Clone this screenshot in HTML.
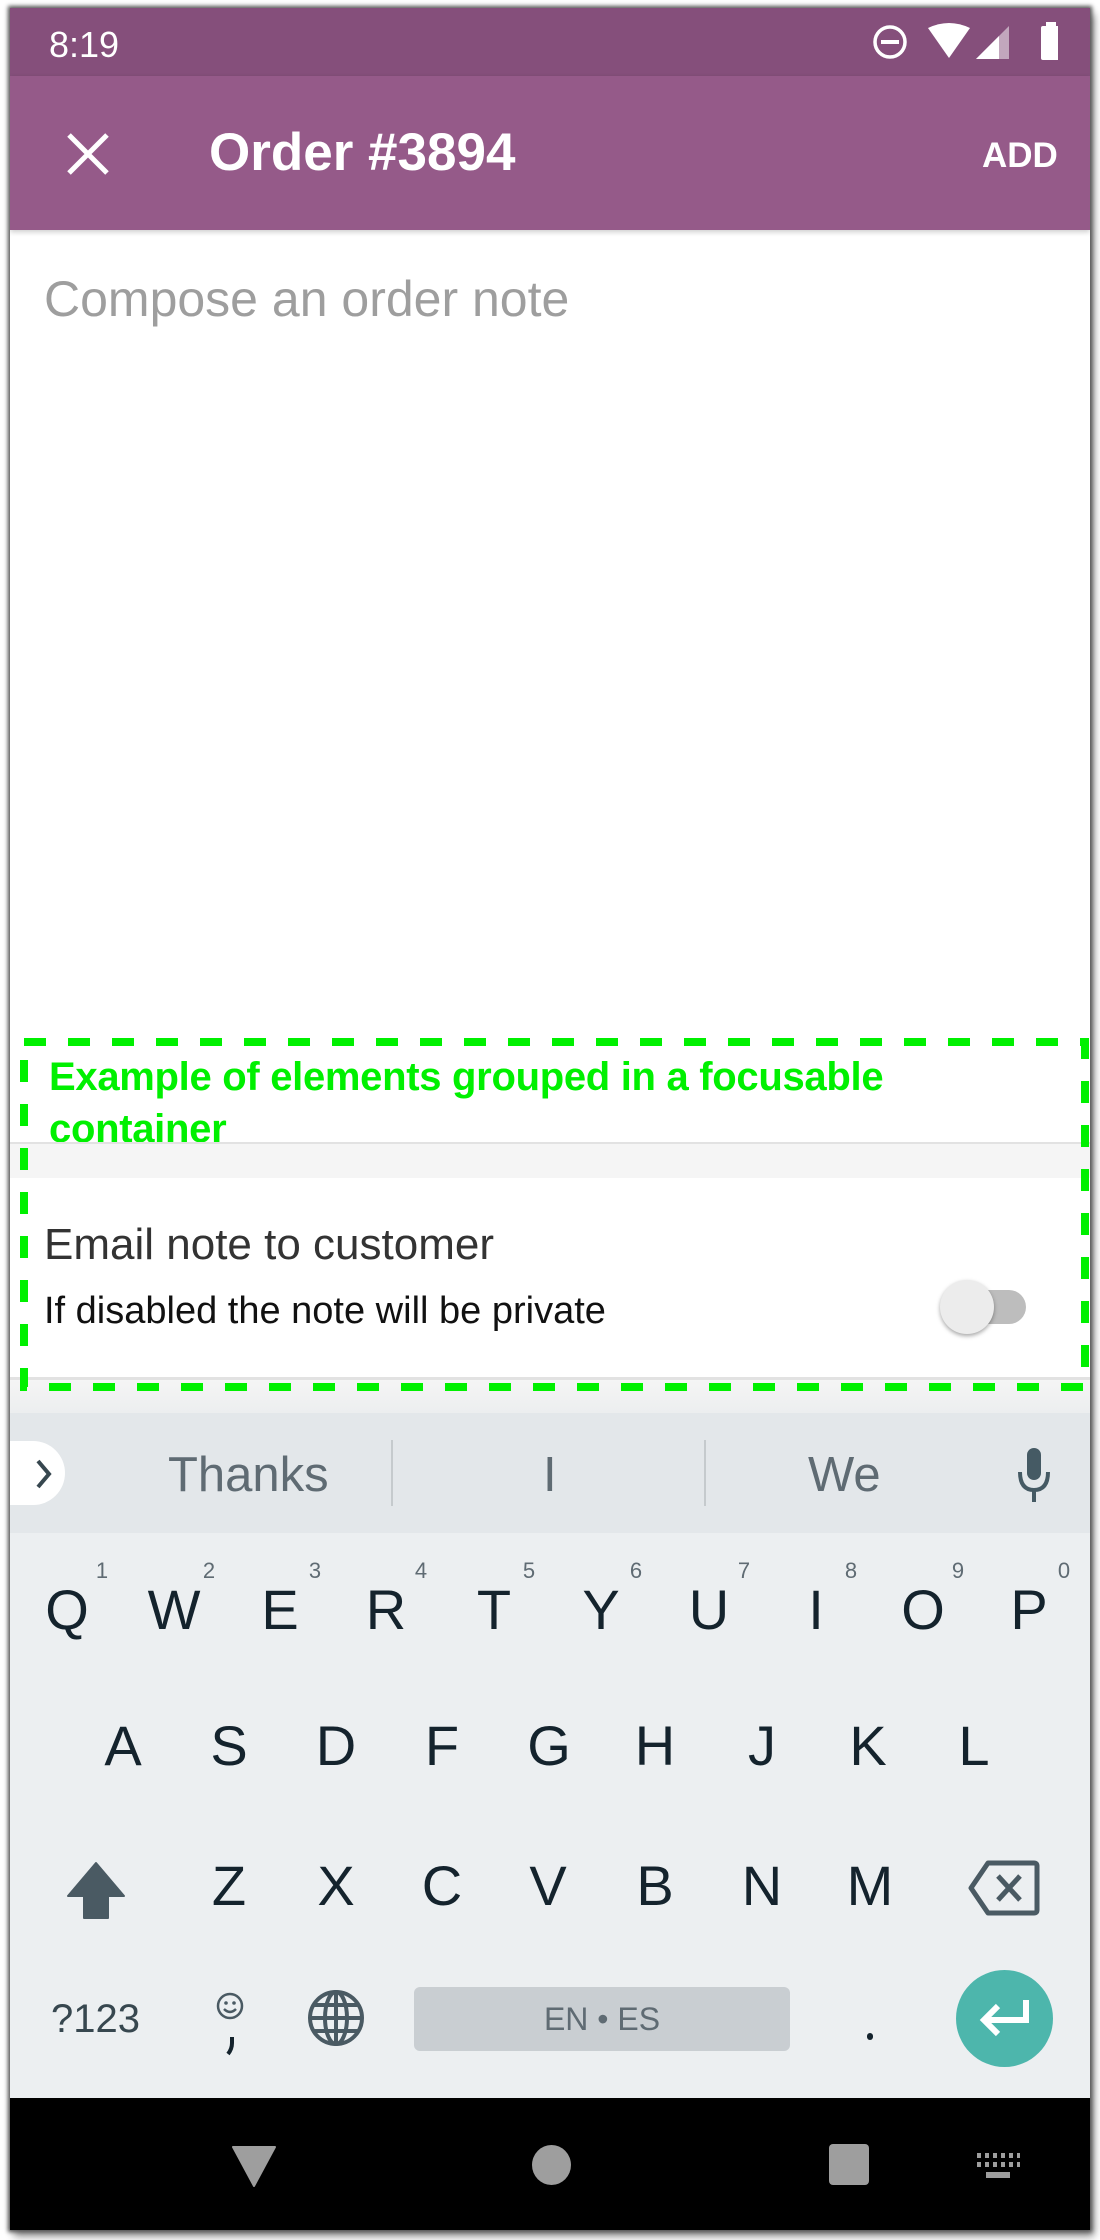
<!DOCTYPE html>
<html><head><meta charset="utf-8"><style>
*{margin:0;padding:0;box-sizing:border-box}
body{width:1100px;height:2240px;background:#fff;position:relative;overflow:hidden;font-family:"Liberation Sans",Arial,sans-serif}
.a{position:absolute}
.phone{left:10px;top:8px;width:1080px;height:2222px;box-shadow:0 0 4px 2px #555, 4px 6px 8px #888;overflow:hidden;background:#fff}
.k{position:absolute;font-size:56px;color:#14232d;transform:translate(-50%,-50%);line-height:1}
.n{position:absolute;font-size:22px;color:#5f6b73;transform:translate(-50%,-50%);line-height:1}
</style></head><body>
<div class="a phone">
 <div class="a" style="left:0;top:0;width:1080px;height:68px;background:#854f7b"></div>
 <div class="a" style="left:39px;top:16px;color:#fff;font-size:36px;">8:19</div>
 <svg class="a" style="left:858px;top:14px" width="190" height="40" viewBox="0 0 190 40">
  <circle cx="22" cy="20" r="15" fill="none" stroke="#fff" stroke-width="3.5"/>
  <rect x="13" y="18" width="18" height="4" fill="#fff"/>
  <path d="M60 6 Q81 -4 102 6 L81 36 Z" fill="#fff"/>
  <path d="M108 37 L141 37 L141 4 Z" fill="#fff" opacity="0.5"/>
  <path d="M108 37 L131 37 L131 14 Z" fill="#fff"/>
  <rect x="173" y="4" width="20" height="34" rx="2" fill="#fff"/>
  <rect x="178" y="0" width="10" height="6" fill="#fff"/>
 </svg>
 <div class="a" style="left:0;top:68px;width:1080px;height:154px;background:#955a89;box-shadow:0 2px 5px rgba(0,0,0,.2)"></div>
 <svg class="a" style="left:56px;top:124px" width="44" height="44" viewBox="0 0 44 44"><path d="M3 3 L41 41 M41 3 L3 41" stroke="#fff" stroke-width="5"/></svg>
 <div class="a" style="left:199px;top:115px;color:#fff;font-size:53px;font-weight:bold;line-height:60px">Order #3894</div>
 <div class="a" style="left:972px;top:128px;color:#fff;font-size:35px;font-weight:bold;line-height:40px">ADD</div>
 <div class="a" style="left:34px;top:261px;color:#9e9e9e;font-size:50px;line-height:60px">Compose an order note</div>

 <div class="a" style="left:39px;top:1043px;color:#00f000;font-size:40px;font-weight:bold;line-height:52px;letter-spacing:-0.3px">Example of elements grouped in a focusable<br>container</div>
 <div class="a" style="left:0;top:1134px;width:1080px;height:2px;background:#e2e2e2"></div>
 <div class="a" style="left:0;top:1136px;width:1080px;height:34px;background:#f5f5f5"></div>
 <div class="a" style="left:34px;top:1212px;color:#333;font-size:44px;line-height:50px">Email note to customer</div>
 <div class="a" style="left:34px;top:1280px;color:#111;font-size:38px;line-height:46px">If disabled the note will be private</div>
 <div class="a" style="left:946px;top:1282px;width:70px;height:34px;border-radius:17px;background:#bdbdbd"></div>
 <div class="a" style="left:930px;top:1272px;width:54px;height:54px;border-radius:50%;background:#ececec;box-shadow:0 2px 4px rgba(0,0,0,.35)"></div>
 <div class="a" style="left:0;top:1369px;width:1080px;height:3px;background:#e2e2e2"></div>
 <div class="a" style="left:0;top:1372px;width:1080px;height:33px;background:linear-gradient(#f5f5f5,#eceeef)"></div>

 <div class="a" style="left:0;top:1405px;width:1080px;height:120px;background:#e3e7ea"></div>
 <div class="a" style="left:-30px;top:1433px;width:85px;height:64px;border-radius:32px;background:#fff"></div>
 <svg class="a" style="left:24px;top:1450px" width="20" height="32" viewBox="0 0 20 32"><path d="M4 3 L15 16 L4 29" fill="none" stroke="#37474f" stroke-width="4"/></svg>
 <div class="a" style="left:158px;top:1440px;color:#5f6b73;font-size:49px;line-height:54px">Thanks</div>
 <div class="a" style="left:381px;top:1432px;width:2px;height:66px;background:#c5cacd"></div>
 <div class="a" style="left:533px;top:1440px;color:#5f6b73;font-size:49px;line-height:54px">I</div>
 <div class="a" style="left:694px;top:1432px;width:2px;height:66px;background:#c5cacd"></div>
 <div class="a" style="left:798px;top:1440px;color:#5f6b73;font-size:49px;line-height:54px">We</div>
 <svg class="a" style="left:1006px;top:1440px" width="36" height="56" viewBox="0 0 36 56"><rect x="11" y="0" width="14" height="32" rx="7" fill="#455a64"/><path d="M4 24 Q4 42 18 42 Q32 42 32 24 M18 42 L18 54" fill="none" stroke="#455a64" stroke-width="4"/></svg>

 <div class="a" style="left:0;top:1525px;width:1080px;height:565px;background:#eceff1"></div>
 <div class="k" style="left:57px;top:1602px">Q</div><div class="n" style="left:92px;top:1563px">1</div>
 <div class="k" style="left:164px;top:1602px">W</div><div class="n" style="left:199px;top:1563px">2</div>
 <div class="k" style="left:270px;top:1602px">E</div><div class="n" style="left:305px;top:1563px">3</div>
 <div class="k" style="left:376px;top:1602px">R</div><div class="n" style="left:411px;top:1563px">4</div>
 <div class="k" style="left:484px;top:1602px">T</div><div class="n" style="left:519px;top:1563px">5</div>
 <div class="k" style="left:591px;top:1602px">Y</div><div class="n" style="left:626px;top:1563px">6</div>
 <div class="k" style="left:699px;top:1602px">U</div><div class="n" style="left:734px;top:1563px">7</div>
 <div class="k" style="left:806px;top:1602px">I</div><div class="n" style="left:841px;top:1563px">8</div>
 <div class="k" style="left:913px;top:1602px">O</div><div class="n" style="left:948px;top:1563px">9</div>
 <div class="k" style="left:1019px;top:1602px">P</div><div class="n" style="left:1054px;top:1563px">0</div>

 <div class="k" style="left:113px;top:1738px">A</div>
 <div class="k" style="left:219px;top:1738px">S</div>
 <div class="k" style="left:326px;top:1738px">D</div>
 <div class="k" style="left:432px;top:1738px">F</div>
 <div class="k" style="left:539px;top:1738px">G</div>
 <div class="k" style="left:645px;top:1738px">H</div>
 <div class="k" style="left:752px;top:1738px">J</div>
 <div class="k" style="left:858px;top:1738px">K</div>
 <div class="k" style="left:964px;top:1738px">L</div>

 <svg class="a" style="left:56px;top:1852px" width="60" height="60" viewBox="0 0 60 60"><path d="M30 3 L58 36 L42 36 L42 58 L18 58 L18 36 L2 36 Z" fill="#4a5a63" stroke="#4a5a63" stroke-width="2" stroke-linejoin="round"/></svg>
 <div class="k" style="left:219px;top:1878px">Z</div>
 <div class="k" style="left:326px;top:1878px">X</div>
 <div class="k" style="left:432px;top:1878px">C</div>
 <div class="k" style="left:538px;top:1878px">V</div>
 <div class="k" style="left:645px;top:1878px">B</div>
 <div class="k" style="left:752px;top:1878px">N</div>
 <div class="k" style="left:860px;top:1878px">M</div>
 <svg class="a" style="left:958px;top:1852px" width="72" height="56" viewBox="0 0 72 56"><path d="M20 3 L66 3 Q69 3 69 6 L69 50 Q69 53 66 53 L20 53 L3 28 Z" fill="none" stroke="#4a5a63" stroke-width="5" stroke-linejoin="round"/><path d="M30 16 L52 40 M52 16 L30 40" stroke="#4a5a63" stroke-width="5"/></svg>

 <div class="a" style="left:41px;top:1988px;color:#37474f;font-size:40px;line-height:46px">?123</div>
 <svg class="a" style="left:205px;top:1983px" width="30" height="66" viewBox="0 0 30 66"><circle cx="15" cy="15" r="12" fill="none" stroke="#4a5a63" stroke-width="2.5"/><circle cx="11" cy="12" r="1.8" fill="#4a5a63"/><circle cx="19" cy="12" r="1.8" fill="#4a5a63"/><path d="M9 18 Q15 24 21 18" fill="none" stroke="#4a5a63" stroke-width="2.5"/><path d="M17 46 L17 52 Q17 58 13 63" fill="none" stroke="#14232d" stroke-width="4"/></svg>
 <svg class="a" style="left:296px;top:1980px" width="60" height="60" viewBox="0 0 60 60"><g fill="none" stroke="#4a5a63" stroke-width="4"><circle cx="30" cy="30" r="26"/><ellipse cx="30" cy="30" rx="11" ry="26"/><path d="M30 4 L30 56 M4 30 L56 30 M8 17 L52 17 M8 43 L52 43"/></g></svg>
 <div class="a" style="left:404px;top:1979px;width:376px;height:64px;border-radius:6px;background:#c9ced2;color:#5f6b73;font-size:32px;text-align:center;line-height:64px">EN • ES</div>
 <div class="a" style="left:857px;top:2025px;width:6px;height:7px;border-radius:3px;background:#14232d"></div>
 <div class="a" style="left:946px;top:1962px;width:97px;height:97px;border-radius:50%;background:#4db6ac"></div>
 <svg class="a" style="left:968px;top:1988px" width="54" height="44" viewBox="0 0 54 44"><path d="M48 4 L48 24 L8 24 M20 10 L6 24 L20 38" fill="none" stroke="#fff" stroke-width="6"/></svg>

 <div class="a" style="left:0;top:2090px;width:1080px;height:140px;background:#000"></div>
 <svg class="a" style="left:222px;top:2138px" width="44" height="42" viewBox="0 0 44 42"><path d="M1 1 L43 1 L22 40 Z" fill="#9e9e9e" stroke="#9e9e9e" stroke-linejoin="round" stroke-width="2"/></svg>
 <div class="a" style="left:522px;top:2137px;width:39px;height:40px;border-radius:50%;background:#9e9e9e"></div>
 <div class="a" style="left:819px;top:2136px;width:40px;height:41px;border-radius:4px;background:#9e9e9e"></div>
 <svg class="a" style="left:966px;top:2145px" width="44" height="26" viewBox="0 0 44 26"><g fill="#9e9e9e"><rect x="1" y="0" width="4" height="5"/><rect x="9" y="0" width="4" height="5"/><rect x="17" y="0" width="4" height="5"/><rect x="25" y="0" width="4" height="5"/><rect x="33" y="0" width="4" height="5"/><rect x="41" y="0" width="3" height="5"/><rect x="1" y="9" width="4" height="5"/><rect x="9" y="9" width="4" height="5"/><rect x="17" y="9" width="4" height="5"/><rect x="25" y="9" width="4" height="5"/><rect x="33" y="9" width="4" height="5"/><rect x="41" y="9" width="3" height="5"/><rect x="10" y="19" width="24" height="6"/></g></svg>
</div>
<svg class="a" style="left:0;top:0" width="1100" height="2240"><rect x="24" y="1042" width="1061" height="345" fill="none" stroke="#00f000" stroke-width="8" stroke-dasharray="22 22"/></svg>
</body></html>
